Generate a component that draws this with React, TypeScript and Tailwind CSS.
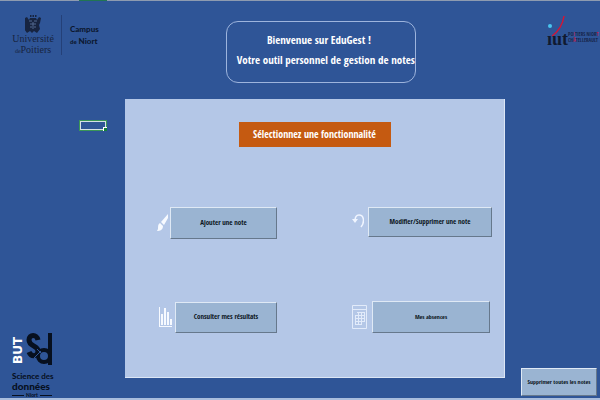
import type { ReactNode } from "react";

const narrow = "font-['Open_Sans_Condensed','Roboto_Condensed','Lato',sans-serif]";

function ActionButton({ className, children }: { className: string; children: ReactNode }) {
  return (
    <button
      type="button"
      className={`${narrow} shrink-0 border border-t-[#dfe9f5] border-l-[#dfe9f5] border-r-[#66788c] border-b-[#66788c] bg-[#9ab4d2] text-center font-bold whitespace-nowrap text-[#0b1420] ${className}`}
    >
      {children}
    </button>
  );
}

function UniversityLogo() {
  return (
    <div className="flex text-[#172440]">
      <div className="flex w-12 flex-col items-center font-['Liberation_Serif',serif]">
        <svg className="h-[18px] w-4" viewBox="0 0 16 18" fill="currentColor" aria-hidden="true">
          <path d="M0 3l2-1 2 3 1-2h6l1 2 2-3 2 1-1 5-1 2 1 4-3 4-3-2-2 2-2-2-3 2-3-4 1-4-1-2z" />
          <path d="M5 0h1.500v2H5zM7.500 0H9v2H7.500zM10 0h1.500v2H10z" />
          <path d="M4 6h3M9 6h3M5 9h6M5 12h2M9 12h2M8 7v7" stroke="#53688f" strokeWidth="1" />
        </svg>
        <span className="text-[10px] leading-3">Université</span>
        <span className="text-[10px] leading-[10px]">
          <span className="text-[6px]">de</span>Poitiers
        </span>
      </div>
      <div className="ml-1 h-10 w-px bg-[#244078]" />
      <div className="ml-2 pt-2 font-['Lato',sans-serif] text-[8px] leading-3 font-black text-[#0c1830]">
        Campus
        <br />
        <span className="text-[6px]">de</span> Niort
      </div>
    </div>
  );
}

function IutLogo() {
  return (
    <div className="flex h-8 w-12 items-end text-[#101a30]" role="img" aria-label="IUT Poitiers Niort Châtellerault">
      <div className="relative w-5 font-['Liberation_Serif',serif] text-lg leading-4 font-bold">
        ıut
        <svg className="absolute bottom-0 left-0 h-8 w-5" viewBox="0 0 20 32" aria-hidden="true">
          <path d="M5 21Q15 14 17 1" fill="none" stroke="#d31636" strokeWidth="1.500" />
          <circle cx="3" cy="11" r="2" fill="#49c5ef" />
        </svg>
      </div>
      <div className="pb-1 pl-px font-['Open_Sans_Condensed','Lato',sans-serif] text-[5px] leading-[6px] font-bold whitespace-nowrap text-[#17254b]">
        PO<span className="text-[#b71c48]">I</span>TIERS NIOR<span className="text-[#b71c48]">T</span>
        <br />
        CH<span className="text-[#b71c48]">Â</span>TELLERAULT
      </div>
    </div>
  );
}

function DataScienceLogo() {
  return (
    <div className="flex w-10 flex-col font-['Lato',sans-serif] font-black text-[#07101f]">
      <div className="flex h-9 items-start justify-between">
        <span className="h-9 w-3 rotate-180 text-center font-['DejaVu_Sans',sans-serif] text-xs leading-3 font-bold text-white [writing-mode:vertical-rl]">
          BUT
        </span>
        <svg className="h-[34px] w-[26px]" viewBox="0 0 26 34" fill="none" stroke="currentColor" role="img" aria-label="Sd">
          <path d="M12 8C11 2 3 2 3 8c0 7 9 5 9 11 0 6-7 6-9 1" strokeWidth="5" />
          <circle cx="18" cy="24" r="6" strokeWidth="4" />
          <path d="M24 1v32" strokeWidth="4" />
          <path d="M11 17l9 9M8 26l7-7" stroke="#2f5597" strokeWidth="1" />
        </svg>
      </div>
      <span className="mt-1 text-[8px] leading-2 whitespace-nowrap">
        Science <span className="font-bold">des</span>
      </span>
      <span className="text-[10px] leading-3">données</span>
      <div className="flex items-center justify-between text-[5px] leading-[6px]">
        <i className="h-px w-3 bg-[#07101f]" />
        Niort
        <i className="h-px w-3 bg-[#07101f]" />
      </div>
    </div>
  );
}

function BrushIcon() {
  return (
    <svg className="h-[18px] w-3" viewBox="0 0 12 18" fill="#f7faff" aria-hidden="true">
      <path d="M11 0L4 8l3 3 4-7zM3 9l3 3c0 4-3 5-6 5l1-2c0-3 0-5 2-6z" />
    </svg>
  );
}

function UndoIcon() {
  return (
    <svg className="h-4 w-3" viewBox="0 0 12 16" fill="none" stroke="#f0f5ff" aria-hidden="true">
      <path d="M3 8C3 4 5 2 7 2c5 0 6 7 2 12" strokeWidth="1.500" />
      <path d="M0 6h6L3 10z" fill="#f0f5ff" stroke="none" />
    </svg>
  );
}

function ChartIcon() {
  return (
    <svg className="h-[22px] w-[13px]" viewBox="0 0 13 22" fill="#f7faff" aria-hidden="true">
      <path d="M0 1h1v19h12v1H0zM2 8h2v11H2zM5 2h2v17H5zM8 6h2v13H8zM11 13h2v6h-2z" />
    </svg>
  );
}

function CalendarIcon() {
  return (
    <svg className="h-[26px] w-4" viewBox="0 0 16 26" fill="none" stroke="#e2ebfa" aria-hidden="true">
      <path d="M.5 1.500h14v23H.5zM.5 5.500h14" />
      <path d="M5 8.500h8M3 11.500h10M3 14.500h10M3 17.500h10M3 20.500h7M3.500 11v10M6.500 8v13M9.500 8v13M12.500 8v10" />
    </svg>
  );
}

export default function App() {
  return (
    <div className="flex min-h-screen flex-col border-b-2 border-[#a9bddd] bg-[#2f5597]">
      <div className="h-px bg-[#8e9bb0]">
        <div className="ml-[79px] h-px w-7 bg-[#217553]" />
      </div>
      <header className="flex h-[98px] items-start">
        <div className="w-[125px] shrink-0 pt-[14px] pl-[9px]">
          <UniversityLogo />
        </div>
        <div className="flex flex-1 justify-center pt-5 pl-3">
          <h1
            className={`${narrow} flex h-[62px] w-[190px] flex-col items-end rounded-xl border border-[#9db4dd] pt-2 text-[11px] leading-5 font-bold whitespace-nowrap text-white`}
          >
            <span className="w-full pr-1 text-center">Bienvenue sur EduGest !</span>
            <span>Votre outil personnel de gestion de notes</span>
          </h1>
        </div>
        <div className="w-[95px] shrink-0 pt-[14px] pl-[42px]">
          <IutLogo />
        </div>
      </header>
      <div className="flex flex-1">
        <aside className="flex w-[125px] shrink-0 flex-col justify-between pl-3">
          <div className="relative mt-[21px] ml-[67px] h-[11px] w-7 border border-[#3a9557]">
            <div className="h-[9px] border border-[#d5e1e4]" />
            <i className="absolute -right-px -bottom-px size-1 border-t border-l border-white bg-[#16803a]" />
          </div>
          <DataScienceLogo />
        </aside>
        <main className="mb-5 flex flex-1 flex-col border-r border-b border-[#dce6f5] bg-[#b4c7e7] pt-[23px]">
          <h2
            className={`${narrow} h-[25px] w-[152px] self-center bg-[#c55a11] text-center text-[10px] leading-6 font-bold whitespace-nowrap text-white`}
          >
            Sélectionnez une fonctionnalité
          </h2>
          <div className="mt-[60px] flex justify-between pr-3 pl-8">
            <div className="flex w-[120px] items-center justify-between">
              <BrushIcon />
              <ActionButton className="h-8 w-[107px] text-[7px]">Ajouter une note</ActionButton>
            </div>
            <div className="flex w-[140px] items-start justify-between">
              <div className="pt-1.5">
                <UndoIcon />
              </div>
              <ActionButton className="h-[30px] w-[124px] text-[7px]">Modifier/Supprimer une note</ActionButton>
            </div>
          </div>
          <div className="mt-[62px] flex justify-between pr-3 pl-[34px]">
            <div className="flex w-[118px] items-center justify-between">
              <ChartIcon />
              <ActionButton className="h-[31px] w-[102px] text-[7px]">Consulter mes résultats</ActionButton>
            </div>
            <div className="flex w-[140px] items-center gap-1">
              <CalendarIcon />
              <ActionButton className="h-8 w-[118px] text-[6px]">Mes absences</ActionButton>
            </div>
          </div>
        </main>
        <aside className="flex w-[95px] shrink-0 items-end justify-end pr-[3px] pb-[2px]">
          <ActionButton className="h-7 w-[76px] text-[6px]">Supprimer toutes les notes</ActionButton>
        </aside>
      </div>
    </div>
  );
}
